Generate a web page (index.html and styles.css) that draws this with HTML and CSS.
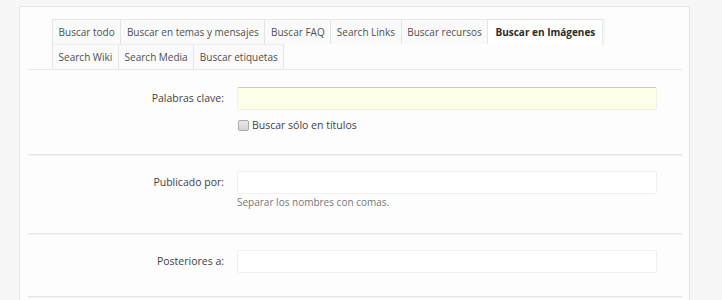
FILE: index.html
```html
<!DOCTYPE html>
<html lang="es">
<head>
<meta charset="utf-8">
<title>Buscar en Imágenes</title>
<link rel="stylesheet" href="styles.css">
</head>
<body>
<div class="panel">
  <div class="inner">
    <div class="tabs">
      <div class="tabRow">
        <a class="tab first">Buscar todo</a>
        <a class="tab">Buscar en temas y mensajes</a>
        <a class="tab">Buscar FAQ</a>
        <a class="tab">Search Links</a>
        <a class="tab">Buscar recursos</a>
        <a class="tab active">Buscar en Imágenes</a>
      </div>
      <div class="tabRow second">
        <a class="tab first">Search Wiki</a>
        <a class="tab">Search Media</a>
        <a class="tab">Buscar etiquetas</a>
      </div>
    </div>

    <div class="formRow first">
      <label class="label">Palabras clave:</label>
      <div class="field">
        <input class="textCtrl keywords" type="text">
        <label class="check"><input type="checkbox" class="box"> Buscar sólo en títulos</label>
      </div>
    </div>

    <div class="formRow second">
      <label class="label">Publicado por:</label>
      <div class="field">
        <input class="textCtrl" type="text">
        <p class="explain">Separar los nombres con comas.</p>
      </div>
    </div>

    <div class="formRow last">
      <label class="label">Posteriores a:</label>
      <div class="field">
        <input class="textCtrl" type="text">
      </div>
    </div>
  </div>
</div>
</body>
</html>
```

FILE: styles.css
```css
html, body {
  margin: 0;
  padding: 0;
}
body {
  background: #f7f7f7;
  font-family: "Open Sans", "DejaVu Sans", sans-serif;
  font-size: 10.5px;
  color: #3f3f3f;
  height: 300px;
  overflow: hidden;
}
.panel {
  margin: 6px 0 0 19px;
  width: 671px;
  height: 294px;
  overflow: hidden;
  background: #fdfdfd;
  border: 1px solid #e6e6e6;
  border-bottom: none;
  box-sizing: border-box;
  padding-top: 12px;
}
.inner {
  margin: 0 7px 0 8px;
}
.tabs {
  padding-left: 24px;
  border-bottom: 1px solid #e8e8e8;
}
.tabRow {
  display: flex;
  height: 25px;
}
.tab {
  display: block;
  height: 25px;
  line-height: 24px;
  padding: 0 5.6px;
  box-sizing: border-box;
  border-top: 1px solid #e5e5e5;
  border-right: 1px solid #e5e5e5;
  background: #fafafa;
  color: #4f4f4f;
  font-size: 10px;
  white-space: nowrap;
}
.tab.first {
  border-left: 1px solid #e5e5e5;
}
.tabRow.second .tab {
  border-top: 1px solid #ececec;
}
.tab.active {
  background: #ffffff;
  color: #2b2b2b;
  font-weight: bold;
  padding: 0 7px;
  height: 26px;
  position: relative;
  z-index: 1;
  border-right-color: #e8e8e8;
  box-shadow: 2px 0 2px rgba(0,0,0,0.03);
}
.formRow {
  display: flex;
  padding: 16px 0 23px;
  border-bottom: 1px solid #e6e6e6;
  box-shadow: 0 1px 0 #f2f2f2;
}
.formRow.first {
  padding: 17px 0 21px;
}
.formRow.last {
  padding-bottom: 23px;
}
.label {
  width: 196px;
  text-align: right;
  line-height: 23px;
  flex: none;
}
.field {
  margin-left: 13px;
  width: 420px;
}
.textCtrl {
  display: block;
  width: 420px;
  height: 23px;
  box-sizing: border-box;
  margin: 0;
  border: 1px solid #f0f0f0;
  border-radius: 2px;
  background: #ffffff;
  font-family: inherit;
  font-size: 11px;
  outline: none;
}
.textCtrl.keywords {
  background: #fefee9;
  border-color: #f1f1e6;
  border-top: 1px solid #c9c9c0;
}
.check {
  display: flex;
  align-items: center;
  margin-top: 7px;
  line-height: 16px;
}
.box {
  -webkit-appearance: none;
  appearance: none;
  width: 11px;
  height: 11px;
  margin: 0 3px 0 1px;
  border: 1px solid #a9a9a9;
  border-radius: 2px;
  background: linear-gradient(#e9e9e9, #d4d4d4);
  box-sizing: border-box;
}
.explain {
  margin: 0;
  line-height: 16px;
  font-size: 10px;
  color: #777;
}
```
